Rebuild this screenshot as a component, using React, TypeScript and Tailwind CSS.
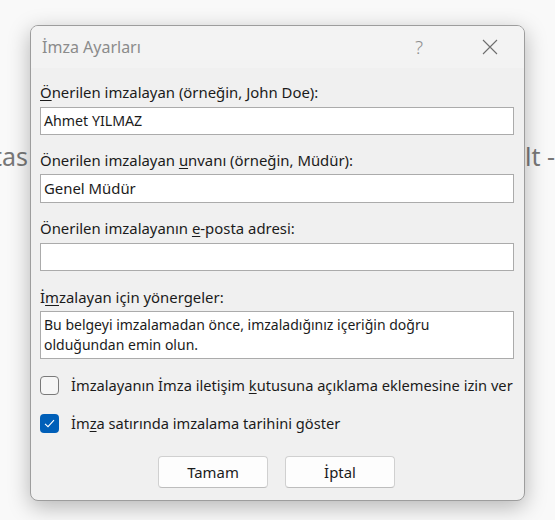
import React from "react";

function U({ children }: { children: React.ReactNode }) {
  return <span className="underline decoration-1 underline-offset-[2px]">{children}</span>;
}

function Field({ className, children }: { className?: string; children?: React.ReactNode }) {
  return (
    <div
      className={
        "border border-[#ababab] bg-white px-[3px] flex items-center whitespace-nowrap " + (className ?? "")
      }
    >
      {children}
    </div>
  );
}

function Button({ label }: { label: string }) {
  return (
    <div className="w-[110px] h-[32px] rounded-[4px] border border-[#d0d0d0] border-b-[#bdbdbd] bg-[#fdfdfd] flex items-center justify-center">
      {label}
    </div>
  );
}

export default function App() {
  return (
    <div className="relative w-[555px] h-[520px] overflow-hidden bg-[#f9f9f9] pt-[25px] pl-[30px] font-['Noto_Sans',sans-serif] text-[14.9px] text-[#1b1b1b]">
      {/* document text behind the dialog */}
      <div className="absolute top-[141px] left-0 w-full text-[25px] leading-[30px] text-[#787878]">
        <span className="absolute right-[527px]">tas</span>
        <span className="absolute left-[525px] whitespace-nowrap">lt -</span>
      </div>

      <div className="relative w-[495px] h-[476px] rounded-lg border border-[#9d9d9d] bg-[#f0f0f0] overflow-hidden shadow-[0_6px_22px_rgba(0,0,0,0.28)] flex flex-col">
        <div className="h-[42px] bg-[#f3f3f3] flex items-center pl-[11px] text-[16px] text-[#8b8b8b]">
          <span className="flex-1">İmza Ayarları</span>
          <span className="text-[19px] font-light text-[#8f8f8f] mr-[59px]">?</span>
          <svg width="16" height="16" viewBox="0 0 16 16" className="mr-[26px]">
            <path d="M1 1L15 15M15 1L1 15" stroke="#6e6e6e" strokeWidth="1.1" fill="none" />
          </svg>
        </div>

        <div className="flex flex-col pl-[9px] pr-[10px] pt-[14px]">
          <div className="h-5 leading-5 whitespace-nowrap">
            <U>Ö</U>nerilen imzalayan (örneğin, John Doe):
          </div>
          <Field className="mt-[5px] h-[28px] text-[14.2px]">Ahmet YILMAZ</Field>

          <div className="mt-[15px] h-5 leading-5 whitespace-nowrap">
            Önerilen imzalayan <U>u</U>nvanı (örneğin, Müdür):
          </div>
          <Field className="mt-[4px] h-[29px]">Genel Müdür</Field>

          <div className="mt-[15px] h-5 leading-5 whitespace-nowrap">
            Önerilen imzalayanın <U>e</U>-posta adresi:
          </div>
          <Field className="mt-[5px] h-[28px]" />

          <div className="mt-[16px] h-5 leading-5 whitespace-nowrap">
            İ<U>m</U>zalayan için yönergeler:
          </div>
          <div className="mt-[4px] h-[48px] border border-[#ababab] bg-white px-[3px] pt-[3px] text-[14px] leading-5 whitespace-nowrap">
            Bu belgeyi imzalamadan önce, imzaladığınız içeriğin doğru
            <br />
            olduğundan emin olun.
          </div>

          <div className="mt-[17px] flex items-center gap-[12px] h-[19px] text-[14.65px] whitespace-nowrap">
            <div className="w-[19px] h-[19px] shrink-0 rounded-[4px] border border-[#7a7a7a] bg-[#f6f6f6]" />
            <span>
              İmzalayanın İmza iletişim <U>k</U>utusuna açıklama eklemesine izin ver
            </span>
          </div>

          <div className="mt-[19px] flex items-center gap-[12px] h-[19px] text-[14.65px] whitespace-nowrap">
            <div className="w-[19px] h-[19px] shrink-0 rounded-[4px] bg-[#005fb8] flex items-center justify-center">
              <svg width="11" height="9" viewBox="0 0 11 9">
                <path d="M1 4.8L4 7.6L10 1.2" stroke="#ffffff" strokeWidth="1.1" fill="none" />
              </svg>
            </div>
            <span>
              İm<U>z</U>a satırında imzalama tarihini göster
            </span>
          </div>

          <div className="mt-[23px] flex justify-center gap-[17px] pr-[1px]">
            <Button label="Tamam" />
            <Button label="İptal" />
          </div>
        </div>
      </div>
    </div>
  );
}
